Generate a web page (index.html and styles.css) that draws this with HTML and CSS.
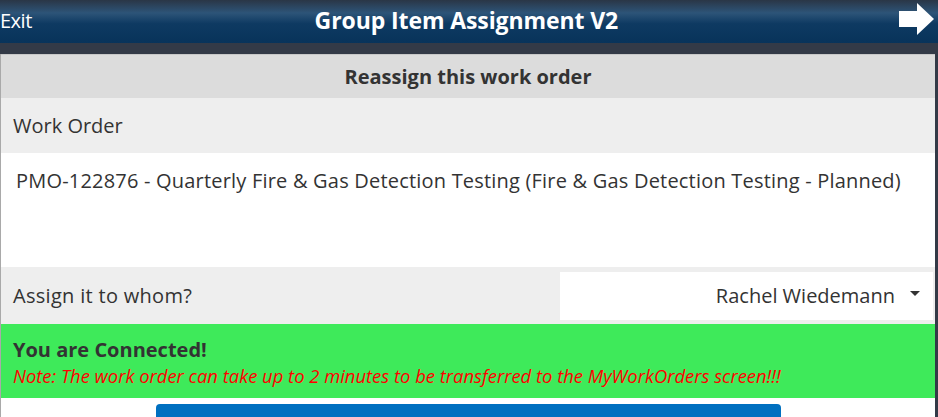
FILE: index.html
```html
<!DOCTYPE html>
<html lang="en">
<head>
  <meta charset="UTF-8">
  <meta name="viewport" content="width=device-width, initial-scale=1.0">
  <title>Group Item Assignment V2</title>
  <link rel="stylesheet" href="styles.css">
</head>
<body>

  <div class="topbar">
    <span class="exit">Exit</span>
    <h1>Group Item Assignment V2</h1>
    <svg class="next" width="36" height="34" viewBox="0 0 36 34">
      <polygon points="0,9 18,9 18,1 35,17 18,33 18,25 0,25" fill="#fff"/>
    </svg>
  </div>
  <div class="band"></div>

  <div class="panel">
    <div class="panel-title">Reassign this work order</div>
    <div class="row label-row">Work Order</div>
    <div class="wo-text">PMO-122876 - Quarterly Fire &amp; Gas Detection Testing (Fire &amp; Gas Detection Testing - Planned)</div>
    <div class="row assign-row">
      <span class="assign-label">Assign it to whom?</span>
      <div class="picker">
        <span>Rachel Wiedemann</span>
        <span class="caret"></span>
      </div>
    </div>
    <div class="status">
      <div class="status-title">You are Connected!</div>
      <div class="status-note">Note: The work order can take up to 2 minutes to be transferred to the MyWorkOrders screen!!!</div>
    </div>
    <div class="actions">
      <button class="submit"></button>
    </div>
  </div>

</body>
</html>
```

FILE: styles.css
```css
body {
  margin: 0;
  background-color: #333a47;
  font-family: 'Open Sans', 'Noto Sans', sans-serif;
  color: #333;
  overflow: hidden;
}

.topbar {
  height: 43px;
  display: flex;
  align-items: center;
  background: linear-gradient(to bottom, #2a3646 0%, #2d5478 30%, #0e3a62 55%, #08335a 100%);
  color: #fff;
}

.exit {
  font-size: 20px;
  letter-spacing: -0.5px;
  margin-top: -2px;
}

.topbar h1 {
  flex: 1;
  margin: 0 0 3px 0;
  text-align: center;
  font-size: 23px;
  font-weight: 700;
  letter-spacing: -0.1px;
  padding-left: 2px;
}

.next {
  margin: 0 3px 6px 0;
}

.band {
  height: 11px;
}

.panel {
  width: 934px;
  background-color: #fff;
  border-left: 1px solid #a9a9a9;
}

.panel-title {
  height: 43px;
  display: flex;
  align-items: center;
  justify-content: center;
  background-color: #dcdcdc;
  border-top: 1px solid #c8c8c8;
  font-size: 20px;
  font-weight: 700;
}

.row {
  background-color: #eeeeee;
  display: flex;
  align-items: center;
  padding-left: 12px;
  font-size: 20px;
}

.label-row {
  height: 55px;
}

.wo-text {
  height: 114px;
  box-sizing: border-box;
  padding: 14px 0 0 15px;
  font-size: 20px;
  letter-spacing: 0.2px;
  white-space: nowrap;
}

.assign-row {
  height: 57px;
  justify-content: space-between;
}

.assign-label {
  letter-spacing: 0.3px;
}

.picker {
  width: 373px;
  height: 48px;
  margin-right: 2px;
  background-color: #fff;
  display: flex;
  align-items: center;
  justify-content: flex-end;
  box-sizing: border-box;
  padding-right: 13px;
  font-size: 20px;
}

.caret {
  margin-left: 15px;
  margin-bottom: 4px;
  border-left: 5px solid transparent;
  border-right: 5px solid transparent;
  border-top: 5px solid #333;
}

.status {
  height: 74px;
  background-color: #3eea5a;
  padding: 13px 0 0 12px;
  box-sizing: border-box;
}

.status-title {
  font-size: 20px;
  font-weight: 700;
  line-height: 26px;
}

.status-note {
  font-size: 18.4px;
  font-style: italic;
  color: #ff0000;
  line-height: 26px;
}

.actions {
  padding: 6px 0 0 155px;
  height: 20px;
}

.submit {
  display: block;
  width: 625px;
  height: 30px;
  border: none;
  border-radius: 4px 4px 0 0;
  background-color: #0070c0;
}
```
